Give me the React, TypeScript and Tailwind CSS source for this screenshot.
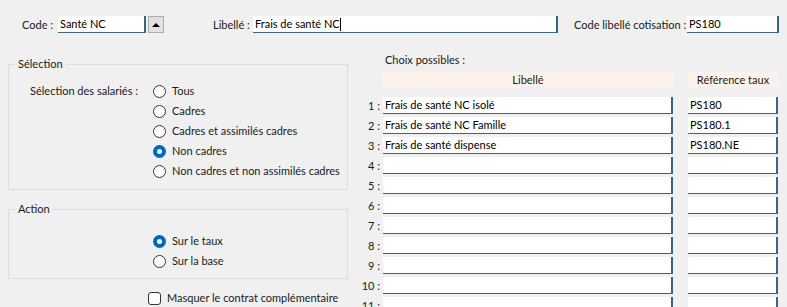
import React from 'react'

const font = { fontFamily: 'Lato, "Noto Sans", sans-serif' }

function Field({ value, className, cursor }: { value: string; className: string; cursor?: boolean }) {
  return (
    <div className={`shrink-0 h-[17px] bg-white border-r-2 border-b border-[#3a6580] pl-[2px] text-[11px] leading-[16px] text-black whitespace-nowrap overflow-hidden ${className}`}>
      {value}
      {cursor && <span className="inline-block w-px h-[13px] bg-black align-middle -mt-[2px]" />}
    </div>
  )
}

function Radio({ label, checked }: { label: string; checked?: boolean }) {
  return (
    <div className="flex items-center h-[20px] gap-[6px] whitespace-nowrap">
      {checked ? (
        <span className="shrink-0 w-[13px] h-[13px] rounded-full bg-[#0067c0] flex items-center justify-center">
          <span className="w-[5px] h-[5px] rounded-full bg-white" />
        </span>
      ) : (
        <span className="shrink-0 w-[13px] h-[13px] rounded-full border border-[#333] bg-white" />
      )}
      <span>{label}</span>
    </div>
  )
}

function GroupBox({ title, className, children }: { title: string; className: string; children: React.ReactNode }) {
  return (
    <div className={`relative border border-[#dcdcdc] ${className}`}>
      <span className="absolute -top-[9px] left-[6px] px-[3px] bg-[#f0f0f0] leading-[16px] whitespace-nowrap">{title}</span>
      {children}
    </div>
  )
}

const rows = [
  ['Frais de santé NC isolé', 'PS180'],
  ['Frais de santé NC Famille', 'PS180.1'],
  ['Frais de santé dispense', 'PS180.NE'],
  ['', ''], ['', ''], ['', ''], ['', ''], ['', ''], ['', ''], ['', ''], ['', ''],
]

export default function App() {
  return (
    <div className="w-[787px] h-[307px] overflow-hidden bg-[#f0f0f0] text-[11px] leading-[16px] text-[#1a1a1a]" style={font}>
      {/* ligne du haut */}
      <div className="flex items-center pt-[16px] h-[33px] whitespace-nowrap">
        <span className="shrink-0 ml-[22px] w-[36px]">Code :</span>
        <Field value="Santé NC" className="w-[88px]" />
        <div className="shrink-0 ml-[2px] w-[16px] h-[17px] bg-[#e1e1e1] border border-[#adadad] flex items-center justify-center">
          <span className="w-0 h-0 border-l-[4px] border-r-[4px] border-b-[4px] border-l-transparent border-r-transparent border-b-black" />
        </div>
        <span className="shrink-0 ml-[49px] w-[40px]">Libellé :</span>
        <Field value="Frais de santé NC" cursor className="w-[305px]" />
        <span className="shrink-0 ml-[16px] w-[113px]">Code libellé cotisation :</span>
        <Field value="PS180" className="w-[92px]" />
      </div>

      <div className="flex">
        {/* colonne gauche */}
        <div className="shrink-0 ml-[8px] w-[340px]">
          <GroupBox title="Sélection" className="mt-[31px] h-[126px]">
            <div className="flex pt-[16px]">
              <span className="shrink-0 ml-[21px] w-[123px] leading-[20px] whitespace-nowrap">Sélection des salariés :</span>
              <div>
                <Radio label="Tous" />
                <Radio label="Cadres" />
                <Radio label="Cadres et assimilés cadres" />
                <Radio label="Non cadres" checked />
                <Radio label="Non cadres et non assimilés cadres" />
              </div>
            </div>
          </GroupBox>
          <GroupBox title="Action" className="mt-[19px] h-[70px]">
            <div className="pl-[144px] pt-[21px]">
              <Radio label="Sur le taux" checked />
              <Radio label="Sur la base" />
            </div>
          </GroupBox>
          <div className="flex items-center gap-[6px] ml-[140px] mt-[11px] h-[16px] whitespace-nowrap">
            <span className="shrink-0 w-[13px] h-[13px] rounded-[3px] border border-[#333] bg-white" />
            <span>Masquer le contrat complémentaire</span>
          </div>
        </div>

        {/* colonne droite */}
        <div className="ml-[12px] flex-1">
          <div className="mt-[19px] ml-[25px] leading-[16px]">Choix possibles :</div>
          <div className="flex mt-[4px] ml-[23px]">
            <div className="w-[290px] h-[15px] bg-[#fdf2e9] text-center leading-[15px]">Libellé</div>
            <div className="ml-[15px] w-[90px] h-[15px] bg-[#fdf2e9] text-center leading-[15px]">Référence taux</div>
          </div>
          <div className="mt-[10px] flex flex-col gap-[3px]">
            {rows.map((r, i) => (
              <div key={i} className="flex items-center h-[17px]">
                <span className="shrink-0 w-[23px] text-right pr-[3px] whitespace-nowrap">{i + 1} :</span>
                <Field value={r[0]} className="w-[290px]" />
                <Field value={r[1]} className="ml-[15px] w-[90px]" />
              </div>
            ))}
          </div>
        </div>
      </div>
    </div>
  )
}
